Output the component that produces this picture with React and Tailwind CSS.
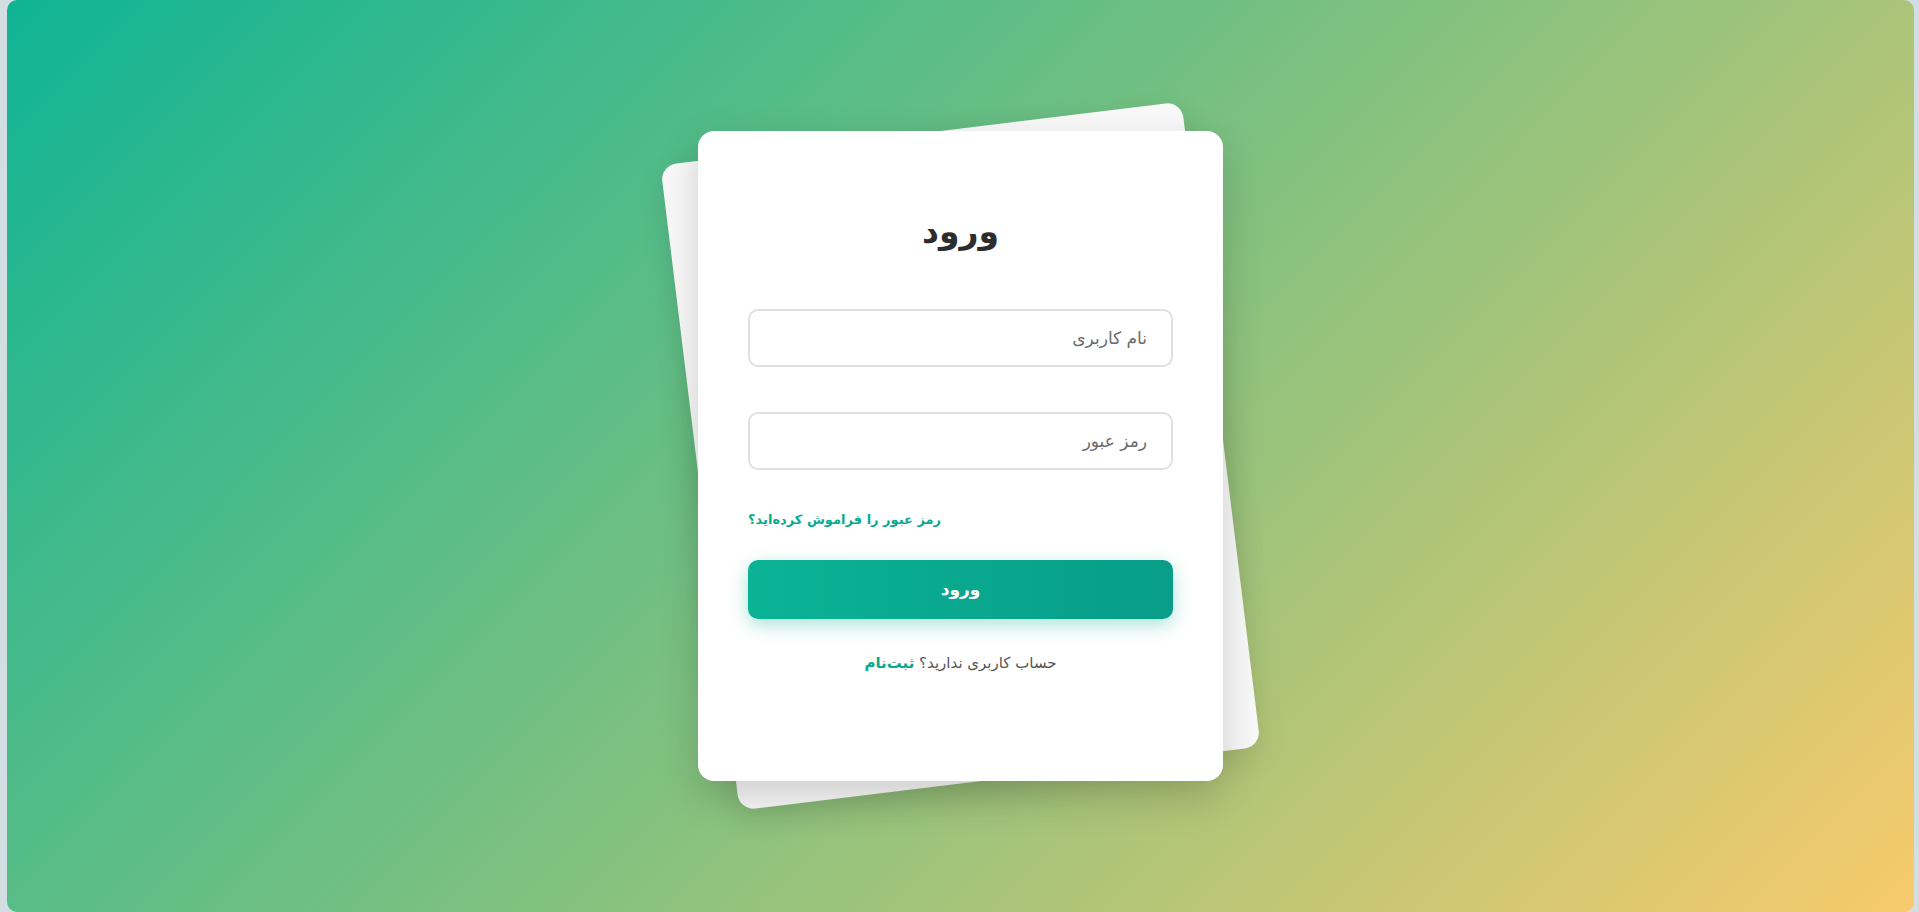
import React from "react";

const font = { fontFamily: '"DejaVu Sans", "Noto Sans", sans-serif' };

const LoginCard = () => {
  return (
    <div className="relative w-[525px] h-[650px]">
      {/* tilted card behind */}
      <div className="absolute inset-0 rounded-2xl bg-[#f9f9f9] shadow-[0_10px_30px_rgba(0,0,0,0.1)] -rotate-[7deg]" />
      <div
        dir="rtl"
        className="relative h-full rounded-2xl bg-white px-[50px] pt-[73px] shadow-[0_15px_40px_rgba(0,0,0,0.18)] flex flex-col"
      >
        <h1 className="text-center text-[33px] leading-[56px] font-bold text-[#2d2d2d]">ورود</h1>
        <input
          type="text"
          placeholder="نام کاربری"
          className="mt-[49px] h-[58px] w-full rounded-[10px] border-2 border-[#e0e0e0] px-[24px] text-[17px] text-[#333] placeholder:text-[#6b6b6b] outline-none"
          style={font}
        />
        <input
          type="password"
          placeholder="رمز عبور"
          className="mt-[45px] h-[58px] w-full rounded-[10px] border-2 border-[#e0e0e0] px-[24px] text-[17px] text-[#333] placeholder:text-[#6b6b6b] outline-none"
          style={font}
        />
        <div className="mt-[38px] flex justify-end">
          <a href="#" className="text-[13px] leading-[24px] font-bold text-[#0aa98c]">
            رمز عبور را فراموش کرده‌اید؟
          </a>
        </div>
        <button
          className="mt-[28px] h-[59px] w-full rounded-[10px] bg-[linear-gradient(90deg,#0bb395,#079d88)] text-[17px] font-bold text-white shadow-[0_6px_18px_rgba(11,179,149,0.35)]"
          style={font}
        >
          ورود
        </button>
        <p className="mt-[32px] text-center text-[15px] leading-[24px] text-[#555]">
          حساب کاربری ندارید؟{" "}
          <a href="#" className="font-bold text-[#0aa98c]">
            ثبت‌نام
          </a>
        </p>
      </div>
    </div>
  );
};

export default function App() {
  return (
    <div className="h-screen w-full bg-[#d3dee3] pl-[7px] pr-[5px]" style={font}>
      <div className="h-full w-full rounded-[10px] bg-[linear-gradient(135deg,#0fb494_0%,#80c180_50%,#f8ca6c_100%)] flex items-center justify-center overflow-hidden">
        <LoginCard />
      </div>
    </div>
  );
}
